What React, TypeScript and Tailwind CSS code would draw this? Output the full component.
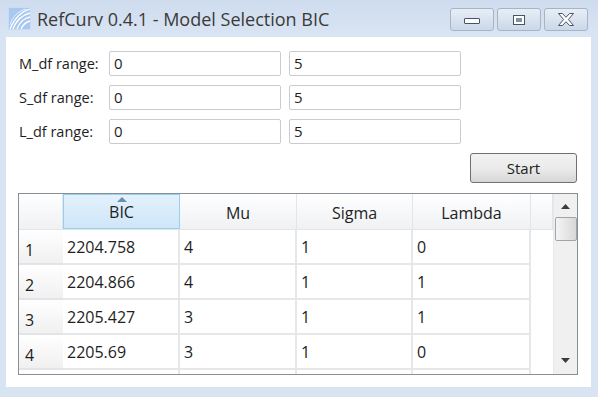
import React from "react";

const ROWS = [
  ["2204.758", "4", "1", "0"],
  ["2204.866", "4", "1", "1"],
  ["2205.427", "3", "1", "1"],
  ["2205.69", "3", "1", "0"],
];

const RANGES = [
  { label: "M_df range:", from: "0", to: "5" },
  { label: "S_df range:", from: "0", to: "5" },
  { label: "L_df range:", from: "0", to: "5" },
];

function AppIcon() {
  return (
    <svg width="23" height="23" viewBox="0 0 23 23">
      <rect x="0.5" y="0.5" width="22" height="22" fill="#a9c8f0" stroke="#c8dcf5" />
      <path d="M2 22 C 6 12, 12 5, 22 2" stroke="#fff" strokeWidth="1.3" fill="none" />
      <path d="M5 22 C 8 14, 14 8, 22 6" stroke="#fff" strokeWidth="1.3" fill="none" />
      <path d="M9 22 C 11 16, 16 11, 22 10" stroke="#fff" strokeWidth="1.3" fill="none" />
      <path d="M13 22 C 15 18, 18 15, 22 14" stroke="#fff" strokeWidth="1.3" fill="none" />
      <path d="M2 18 C 4 10, 10 4, 18 2" stroke="#e6f0fc" strokeWidth="1" fill="none" />
    </svg>
  );
}

function WinButton({ children }: { children: React.ReactNode }) {
  return (
    <div className="flex items-center justify-center w-[44px] h-[23px] rounded-[3px] border border-[#a5b4c8] bg-gradient-to-b from-[#e8eef6] to-[#cbd8e8]">
      {children}
    </div>
  );
}

function TitleBar() {
  return (
    <div className="flex items-center h-[37px] pl-[8px] pr-[10px] bg-gradient-to-b from-[#cfdcee] to-[#d9e5f3]">
      <AppIcon />
      <div className="ml-[6px] text-[18px] text-[#3a3a3a] font-['Open_Sans',sans-serif] leading-none">
        RefCurv 0.4.1 - Model Selection BIC
      </div>
      <div className="ml-auto flex gap-[3px] self-start mt-[8px]">
        <WinButton>
          <svg width="20" height="10" viewBox="0 0 20 10">
            <rect x="2.5" y="3.5" width="15" height="5" rx="0.5" fill="#fff" stroke="#475468" />
          </svg>
        </WinButton>
        <WinButton>
          <svg width="14" height="12" viewBox="0 0 14 12">
            <rect x="1.5" y="1.5" width="11" height="9" fill="#fff" stroke="#475468" />
            <rect x="4" y="4" width="6" height="4" fill="#8090a8" />
          </svg>
        </WinButton>
        <WinButton>
          <svg width="18" height="15" viewBox="0 0 18 15">
            <path
              d="M1.5 1.5 L5.5 1.5 L9 5.3 L12.5 1.5 L16.5 1.5 L11.4 7.5 L16.5 13.5 L12.5 13.5 L9 9.7 L5.5 13.5 L1.5 13.5 L6.6 7.5 Z"
              fill="#fff"
              stroke="#475468"
              strokeWidth="1"
            />
          </svg>
        </WinButton>
      </div>
    </div>
  );
}

function RangeRow({ label, from, to }: { label: string; from: string; to: string }) {
  return (
    <div className="flex items-center h-[25px]">
      <div className="w-[90px] text-[14.5px] text-[#1e1e1e]">{label}</div>
      <div className="w-[172px] h-[25px] border border-[#c8ccd2] rounded-[2px] px-[4px] flex items-center text-[15px] text-[#1e1e1e]">
        {from}
      </div>
      <div className="ml-[8px] w-[172px] h-[25px] border border-[#c8ccd2] rounded-[2px] px-[4px] flex items-center text-[15px] text-[#1e1e1e]">
        {to}
      </div>
    </div>
  );
}

function HeaderCell({ children, active }: { children?: React.ReactNode; active?: boolean }) {
  if (active) {
    return (
      <div className="relative h-[35px] flex items-end justify-center pb-[4px] border border-[#96cff0] bg-gradient-to-b from-[#e3f1fc] to-[#cfe6f8] text-[16px] text-[#1e1e1e]">
        <svg className="absolute top-[2px] left-1/2 -translate-x-1/2" width="10" height="5" viewBox="0 0 10 5">
          <path d="M0 5 L5 0 L10 5 Z" fill="#6b8db0" />
        </svg>
        {children}
      </div>
    );
  }
  return (
    <div className="h-[35px] flex items-end justify-center pb-[4px] border-r border-[#e3e5e8] bg-gradient-to-b from-[#ffffff] via-[#f7f8fa] to-[#f0f1f3] text-[16px] text-[#1e1e1e]">
      {children}
    </div>
  );
}

function DataTable() {
  return (
    <div className="mt-[10px] mx-[12px] mr-[13px] h-[182px] border border-[#8a8f96] flex overflow-hidden">
      <div className="flex-1 flex flex-col overflow-hidden">
        <div className="grid grid-cols-[44px_117px_117px_116px_118px_1fr] border-b border-[#e3e5e8]">
          <HeaderCell />
          <HeaderCell active>BIC</HeaderCell>
          <HeaderCell>Mu</HeaderCell>
          <HeaderCell>Sigma</HeaderCell>
          <HeaderCell>Lambda</HeaderCell>
          <HeaderCell />
        </div>
        {ROWS.concat([["", "", "", ""]]).map((row, i) => (
          <div key={i} className="grid grid-cols-[44px_117px_117px_116px_118px_1fr] h-[35px] shrink-0">
            <div className="flex items-center pl-[6px] pt-[6px] text-[16px] text-[#1e1e1e] bg-gradient-to-b from-[#ffffff] to-[#f0f0f0] border-b-2 border-[#e2e4e7]">
              {row[0] ? i + 1 : ""}
            </div>
            {row.map((v, j) => (
              <div
                key={j}
                className="flex items-center pl-[4px] pt-[1px] text-[16px] text-[#1e1e1e] border-r-2 border-b-2 border-[#e6e7e9]"
              >
                {v}
              </div>
            ))}
            <div />
          </div>
        ))}
      </div>
      <div className="w-[24px] bg-[#f0f0f0] border-l border-[#e8e8e8] flex flex-col items-center">
        <svg className="mt-[10px]" width="9" height="5" viewBox="0 0 9 5">
          <path d="M0 5 L4.5 0 L9 5 Z" fill="#3c3c3c" />
        </svg>
        <div className="mt-[8px] w-[22px] h-[24px] rounded-[2px] border border-[#9ea5ad] bg-gradient-to-r from-[#f4f4f4] via-[#e6e6e6] to-[#d8d8d8]" />
        <svg className="mt-auto mb-[11px]" width="9" height="5" viewBox="0 0 9 5">
          <path d="M0 0 L4.5 5 L9 0 Z" fill="#3c3c3c" />
        </svg>
      </div>
    </div>
  );
}

export default function App() {
  return (
    <div className="w-[598px] h-[397px] bg-[#d8e4f2] flex flex-col font-['Open_Sans',sans-serif] overflow-hidden">
      <TitleBar />
      <div className="flex-1 ml-[6px] mr-[7px] mb-[10px] bg-white flex flex-col">
        <div className="pt-[14px] pl-[13px] flex flex-col gap-[9px]">
          {RANGES.map((r) => (
            <RangeRow key={r.label} {...r} />
          ))}
        </div>
        <div className="flex justify-end pr-[14px] mt-[9px]">
          <button className="w-[107px] h-[30px] rounded-[3px] border border-[#707070] bg-gradient-to-b from-[#f2f2f2] via-[#ebebeb] to-[#d6d6d6] text-[15px] text-[#1e1e1e]">
            Start
          </button>
        </div>
        <DataTable />
      </div>
    </div>
  );
}
